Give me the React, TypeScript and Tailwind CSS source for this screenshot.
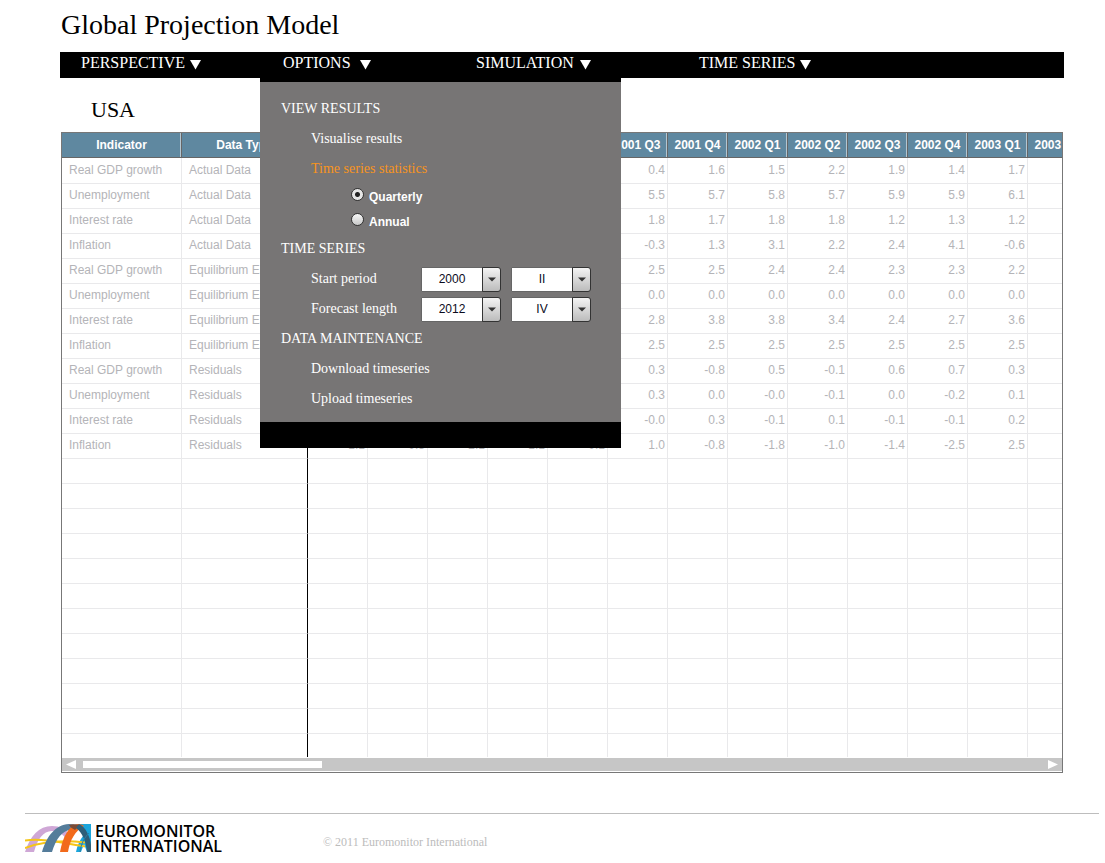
import React, { useState } from "react";

const quarters = [
  "2000 Q2", "2000 Q3", "2000 Q4", "2001 Q1", "2001 Q2", "2001 Q3", "2001 Q4",
  "2002 Q1", "2002 Q2", "2002 Q3", "2002 Q4", "2003 Q1", "2003 Q2",
];

type Row = { indicator: string; type: string; early?: string[]; values: string[] };

const rows: Row[] = [
  { indicator: "Real GDP growth", type: "Actual Data", values: ["0.4", "1.6", "1.5", "2.2", "1.9", "1.4", "1.7"] },
  { indicator: "Unemployment", type: "Actual Data", values: ["5.5", "5.7", "5.8", "5.7", "5.9", "5.9", "6.1"] },
  { indicator: "Interest rate", type: "Actual Data", values: ["1.8", "1.7", "1.8", "1.8", "1.2", "1.3", "1.2"] },
  { indicator: "Inflation", type: "Actual Data", values: ["-0.3", "1.3", "3.1", "2.2", "2.4", "4.1", "-0.6"] },
  { indicator: "Real GDP growth", type: "Equilibrium Est.", values: ["2.5", "2.5", "2.4", "2.4", "2.3", "2.3", "2.2"] },
  { indicator: "Unemployment", type: "Equilibrium Est.", values: ["0.0", "0.0", "0.0", "0.0", "0.0", "0.0", "0.0"] },
  { indicator: "Interest rate", type: "Equilibrium Est.", values: ["2.8", "3.8", "3.8", "3.4", "2.4", "2.7", "3.6"] },
  { indicator: "Inflation", type: "Equilibrium Est.", values: ["2.5", "2.5", "2.5", "2.5", "2.5", "2.5", "2.5"] },
  { indicator: "Real GDP growth", type: "Residuals", values: ["0.3", "-0.8", "0.5", "-0.1", "0.6", "0.7", "0.3"] },
  { indicator: "Unemployment", type: "Residuals", values: ["0.3", "0.0", "-0.0", "-0.1", "0.0", "-0.2", "0.1"] },
  { indicator: "Interest rate", type: "Residuals", values: ["-0.0", "0.3", "-0.1", "0.1", "-0.1", "-0.1", "0.2"] },
  {
    indicator: "Inflation",
    type: "Residuals",
    early: ["1.1", "0.3", "2.1", "1.1", "0.1"],
    values: ["1.0", "-0.8", "-1.8", "-1.0", "-1.4", "-2.5", "2.5"],
  },
];

const blankRows = Array.from({ length: 12 }, (_, i) => i);

function NavButton({ label, width, labelWidth }: { label: string; width: string; labelWidth: string }) {
  return (
    <button type="button" className={`flex h-[26px] shrink-0 items-start text-left text-base leading-[22px] ${width}`}>
      <span className={`whitespace-nowrap ${labelWidth}`}>{label}</span>
      <svg width="11" height="10" viewBox="0 0 11 10" className="mt-2" aria-hidden="true">
        <path d="M0 0H11L5.5 9.5Z" fill="#fff" />
      </svg>
    </button>
  );
}

function Combo({ label, options, initial }: { label: string; options: string[]; initial: string }) {
  const [value, setValue] = useState(initial);
  return (
    <span className="relative flex h-[25px] w-20">
      <select
        aria-label={label}
        value={value}
        onChange={(e) => setValue(e.target.value)}
        className="w-full appearance-none rounded-r-[3px] border border-[#666] bg-white pr-[18px] text-center font-['Liberation_Sans',Arial,sans-serif] text-xs text-[#0b0b1c]"
      >
        {options.map((o) => (
          <option key={o}>{o}</option>
        ))}
      </select>
      <span className="pointer-events-none absolute inset-y-0 right-0 flex w-[19px] items-center justify-center rounded-r-[3px] border border-[#333] bg-linear-to-b from-[#f4f4f4] to-[#bcbcbc]">
        <svg width="8" height="5" viewBox="0 0 8 5" aria-hidden="true">
          <path d="M0 0.5H8L4 4.5Z" fill="#333" />
        </svg>
      </span>
    </span>
  );
}

function Radio({ label, checked, onSelect }: { label: string; checked: boolean; onSelect: () => void }) {
  return (
    <label className="flex h-[25px] items-start gap-[5px] pt-1 pl-[91px] font-['Liberation_Sans',Arial,sans-serif] text-xs leading-[18px] font-bold">
      <input
        type="radio"
        name="frequency"
        checked={checked}
        onChange={onSelect}
        className="size-[13px] appearance-none rounded-full border border-[#333] bg-linear-to-b from-[#f8f8f8] to-[#c8c8c8] checked:bg-[radial-gradient(circle,#222_0_2px,#e6e6e6_3px)]"
      />
      {label}
    </label>
  );
}

function OptionsMenu() {
  const [frequency, setFrequency] = useState("Quarterly");
  const head = "flex h-[30px] items-center pl-[21px]";
  const item = "flex h-[30px] items-center pl-[51px]";
  return (
    <div className="absolute top-[26px] left-[200px] z-10 w-[361px] border-t-4 border-b-[26px] border-black bg-[#777575] pt-3 pb-2 text-sm text-white">
      <h2 className={head}>VIEW RESULTS</h2>
      <a href="#visualise" className={item}>Visualise results</a>
      <a href="#statistics" className={`${item} text-[#f7941d]`}>Time series statistics</a>
      {["Quarterly", "Annual"].map((f) => (
        <Radio key={f} label={f} checked={frequency === f} onSelect={() => setFrequency(f)} />
      ))}
      <h2 className={head}>TIME SERIES</h2>
      <div className={item}>
        <span className="w-[110px]">Start period</span>
        <div className="flex gap-[10px]">
          <Combo label="Start year" options={["1999", "2000", "2001"]} initial="2000" />
          <Combo label="Start quarter" options={["I", "II", "III", "IV"]} initial="II" />
        </div>
      </div>
      <div className={item}>
        <span className="w-[110px]">Forecast length</span>
        <div className="flex gap-[10px]">
          <Combo label="Forecast year" options={["2011", "2012", "2013"]} initial="2012" />
          <Combo label="Forecast quarter" options={["I", "II", "III", "IV"]} initial="IV" />
        </div>
      </div>
      <h2 className={head}>DATA MAINTENANCE</h2>
      <a href="#download" className={item}>Download timeseries</a>
      <a href="#upload" className={item}>Upload timeseries</a>
    </div>
  );
}

function DataGrid() {
  const th = "h-[25px] border-b border-b-[#666] p-0 text-center font-bold text-white border-r border-r-[#666] shadow-[inset_-1px_0_0_#b4c6d1] last:shadow-none";
  const line = "border-r border-b border-[#e9e9eb]";
  return (
    <div className="mx-px border border-[#777] bg-white font-['Liberation_Sans',Arial,sans-serif] text-xs">
      <div className="overflow-hidden pb-px">
        <table className="w-[1026px] table-fixed border-separate border-spacing-0 text-[#b4b4b8]">
          <colgroup>
            <col className="w-[120px]" />
            <col className="w-[126px]" />
            {quarters.map((q) => (
              <col key={q} className="w-[60px]" />
            ))}
          </colgroup>
          <thead className="bg-[#5f88a0]">
            <tr>
              <th className={th}>Indicator</th>
              <th className={th}>Data Type</th>
              {quarters.map((q) => (
                <th key={q} className={th}>{q}</th>
              ))}
            </tr>
          </thead>
          <tbody>
            {rows.map((r, i) => (
              <tr key={i} className="h-[25px] first:h-[26px]">
                <td className={`${line} p-0 pb-[2px] pl-[7px]`}>{r.indicator}</td>
                <td className={`${line} border-r-black p-0 pb-[2px] pl-[7px]`}>{r.type}</td>
                {quarters.map((q, c) => (
                  <td key={q} className={`${line} p-0 pr-[2px] pb-[2px] text-right`}>
                    {c < 5 ? r.early?.[c] : r.values[c - 5]}
                  </td>
                ))}
              </tr>
            ))}
            {blankRows.map((b) => (
              <tr key={b} className="h-[25px] last:h-[23px] last:[&>td]:border-b-0">
                <td className={`${line} p-0`} />
                <td className={`${line} border-r-black p-0`} />
                {quarters.map((q) => (
                  <td key={q} className={`${line} p-0`} />
                ))}
              </tr>
            ))}
          </tbody>
        </table>
      </div>
      <div className="mb-px flex h-[13px] items-center bg-[#c6c6c6] px-1">
        <button type="button" aria-label="Scroll left" className="w-[17px]">
          <svg width="10" height="9" viewBox="0 0 10 9" aria-hidden="true">
            <path d="M10 0V9L0 4.5Z" fill="#fff" />
          </svg>
        </button>
        <div className="flex-1">
          <div className="h-[7px] w-[239px] bg-white" />
        </div>
        <button type="button" aria-label="Scroll right">
          <svg width="10" height="9" viewBox="0 0 10 9" aria-hidden="true">
            <path d="M0 0V9L10 4.5Z" fill="#fff" />
          </svg>
        </button>
      </div>
    </div>
  );
}

function Logo() {
  return (
    <a href="#home" className="flex items-start gap-1 text-black">
      <svg width="66" height="28" viewBox="0 0 66 28" aria-hidden="true">
        <path d="M51 28C52 22 55 16 58 12L55 0H66V28H62L59 20L56 28Z" fill="#1ba6dc" />
        <path d="M0 28C5 12 14 2 27 2C35 2 41 5 45 11L42 16C38 10 33 7 27 7C18 7 12 16 9 28Z" fill="#cfa7d6" />
        <g fill="none" stroke="#f5c518" strokeWidth="2">
          <path d="M0 16.500C18 14 38 19 60 22.500" />
          <path d="M0 24C16 18 38 16 60 18.500" />
        </g>
        <path d="M17 28C22 12 30 1 44 0C48 0 51 1 53 3L49 6C39 4 31 14 27 28Z" fill="#547c9a" />
        <path d="M35 28C38 13 43 2 53 0C56 0 58 1 59 2C50 7 45 16 43 28Z" fill="#f26a1b" />
        <path d="M44 1C47 0 52 0 55 1L50 6C48 5 45 3 44 1Z" fill="#7b4a35" />
        <path d="M54 0C61 3 65 13 66 21V28H62C61 18 58 9 51 4Z" fill="#2f5f78" />
        <path d="M55 28C56 20 59 14 64 9" fill="none" stroke="#2c7fa6" strokeWidth="1" />
      </svg>
      <span className="font-['Open_Sans',sans-serif] text-base leading-[15px] font-semibold">
        EUROMONITOR
        <br />
        INTERNATIONAL
      </span>
    </a>
  );
}

export default function App() {
  return (
    <div className="min-h-screen bg-white font-['Liberation_Serif','Times_New_Roman',serif] text-black">
      <main className="pr-[41px] pl-[60px]">
        <h1 className="px-px pt-2 text-[28px] leading-[34px]">Global Projection Model</h1>
        <nav className="relative mt-[10px] flex h-[26px] bg-black pl-[21px] text-white">
          <NavButton label="PERSPECTIVE" width="w-[202px]" labelWidth="w-[109px]" />
          <NavButton label="OPTIONS" width="w-[193px]" labelWidth="w-[77px]" />
          <NavButton label="SIMULATION" width="w-[223px]" labelWidth="w-[104px]" />
          <NavButton label="TIME SERIES" width="w-[120px]" labelWidth="w-[101px]" />
          <OptionsMenu />
        </nav>
        <h2 className="pt-[18px] pb-[8px] pl-[31px] text-[22px] leading-[28px]">USA</h2>
        <DataGrid />
      </main>
      <footer className="mt-10 mr-[6px] ml-[25px] flex items-start border-t border-[#bdbdbd] pt-[10px]">
        <div className="w-[298px]">
          <Logo />
        </div>
        <p className="pt-[10px] text-xs leading-4 text-[#bcbcbc]">© 2011 Euromonitor International</p>
      </footer>
    </div>
  );
}
